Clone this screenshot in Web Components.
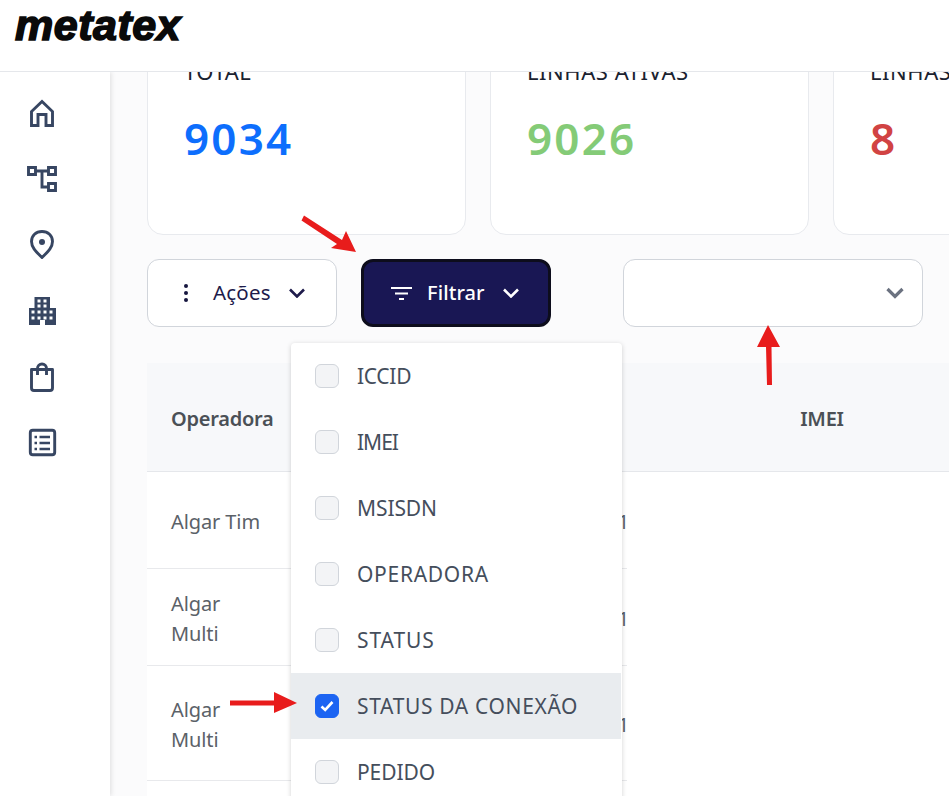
<!DOCTYPE html>
<html lang="pt-BR">
<head>
<meta charset="utf-8">
<title>metatex</title>
<style>
    html, body { margin: 0; height: 796px; overflow: hidden; background: #fff; }
    body { font-family: "Noto Sans", "Open Sans", sans-serif; color: #1f2937; position: relative; }
</style>
</head>
<body>

<mt-app>
    <mt-header slot="header">metatex</mt-header>
    <mt-sidebar slot="side"></mt-sidebar>

    <mt-stats>
        <mt-stat label="TOTAL" value="9034" color="#0d6efd"></mt-stat>
        <mt-stat label="LINHAS ATIVAS" value="9026" color="#84cb77"></mt-stat>
        <mt-stat label="LINHAS INATIVAS" value="8" color="#d14343"></mt-stat>
    </mt-stats>

    <mt-toolbar>
        <mt-button icon="dots">Ações</mt-button>
        <mt-button icon="filter" dark>
            Filtrar
            <mt-filter-menu slot="menu">
                <mt-check spacing="-0.3">ICCID</mt-check>
                <mt-check spacing="-1">IMEI</mt-check>
                <mt-check spacing="-0.1">MSISDN</mt-check>
                <mt-check spacing="0.7">OPERADORA</mt-check>
                <mt-check spacing="0.9">STATUS</mt-check>
                <mt-check spacing="0.65" checked>STATUS DA CONEXÃO</mt-check>
                <mt-check spacing="-0.1">PEDIDO</mt-check>
            </mt-filter-menu>
        </mt-button>
        <mt-select></mt-select>
    </mt-toolbar>

    <mt-table></mt-table>
</mt-app>

<mt-arrows></mt-arrows>

<script>
const appTemplate = document.createElement('template');
appTemplate.innerHTML = `
    <style>
        :host { display: grid; grid-template-columns: 110px 1fr; grid-template-rows: 72px 724px; height: 796px; overflow: hidden; }
        .top { grid-column: 1 / 3; position: relative; z-index: 3; }
        .side { position: relative; z-index: 2; }
        main { background: #fbfbfc; overflow: hidden; padding-left: 37px; min-width: 0; }
    </style>
    <div class="top"><slot name="header"></slot></div>
    <div class="side"><slot name="side"></slot></div>
    <main><slot></slot></main>
`;

class MtApp extends HTMLElement {
    constructor() {
        super();
        this.attachShadow({mode: 'open'});
        this.shadowRoot.appendChild(appTemplate.content.cloneNode(true));
    }
}

const headerTemplate = document.createElement('template');
headerTemplate.innerHTML = `
    <style>
        :host { display: block; box-sizing: border-box; height: 72px; background: #fff; border-bottom: 1px solid #e5e7eb; padding-left: 15px; }
        .logo {
            font: italic 700 43px/50px "Liberation Sans", Arial, sans-serif;
            color: #0a0a0a;
            -webkit-text-stroke: 1.6px #0a0a0a;
            letter-spacing: 0.5px;
        }
    </style>
    <div class="logo"><slot></slot></div>
`;

class MtHeader extends HTMLElement {
    constructor() {
        super();
        this.attachShadow({mode: 'open'});
        this.shadowRoot.appendChild(headerTemplate.content.cloneNode(true));
    }
}

const sidebarTemplate = document.createElement('template');
sidebarTemplate.innerHTML = `
    <style>
        :host { display: block; height: 724px; background: #fff; box-shadow: 1px 0 5px rgba(0, 0, 0, .12); }
        nav { display: flex; flex-direction: column; align-items: flex-start; gap: 36px; padding: 26px 0 0 27px; }
        svg { display: block; width: 30px; height: 30px; fill: none; stroke: #374662; stroke-width: 2.9; stroke-linejoin: round; }
    </style>
    <nav>
        <svg viewBox="27 98 30 30"><path stroke-linejoin="miter" d="M31.5 125.5V111.5L42 101.5L52.5 111.5V125.5H46V114.5H38V125.5Z"/></svg>
        <svg viewBox="27 164 30 30"><path stroke-linejoin="miter" d="M28.5 167.5H35.5V174.5H28.5ZM48.5 167.5H55.5V174.5H48.5ZM48.5 183.5H55.5V190.5H48.5ZM35.5 171H48.5M42 171V187H48.5"/></svg>
        <svg viewBox="27 230 30 30"><path d="M42 257.5C37 252.5 31.5 248 31.5 241.5C31.5 235.5 36 231.5 42 231.5C48 231.5 52.5 235.5 52.5 241.5C52.5 248 47 252.5 42 257.5Z"/><circle cx="42" cy="242" r="3" fill="#374662" stroke="none"/></svg>
        <svg viewBox="27 296 30 30"><path stroke="none" fill="#374662" fill-rule="evenodd" d="M34.500 297H50V308H56V325H45V320H40V325H29V308H34.500ZM37.500 299.500V302.500H40.500V299.500ZM43.500 299.500V302.500H46.500V299.500ZM37.500 304.500V307.500H40.500V304.500ZM43.500 304.500V307.500H46.500V304.500ZM31.500 310.500V313.500H34.500V310.500ZM37.500 310.500V313.500H40.500V310.500ZM43.500 310.500V313.500H46.500V310.500ZM49.500 310.500V313.500H52.500V310.500ZM31.500 316.500V319.500H34.500V316.500ZM37.500 316.500V319.500H40.500V316.500ZM43.500 316.500V319.500H46.500V316.500ZM49.500 316.500V319.500H52.500V316.500Z"/></svg>
        <svg viewBox="27 362 30 30"><path d="M31.500 369.500H52.500V388C52.500 389.500 51.500 390.500 50 390.500H34C32.500 390.500 31.500 389.500 31.500 388ZM37.500 375V368.500C37.500 365.800 39.500 364 42 364C44.500 364 46.500 365.800 46.500 368.500V375"/></svg>
        <svg viewBox="27 428 30 30"><rect x="30.300" y="430.300" width="24.400" height="24.400" rx="2.500"/><path d="M39.500 437H50M39.500 443H50M39.500 449H50" stroke-width="2.400"/><path d="M34.500 437H37M34.500 443H37M34.500 449H37" stroke-width="2.400"/></svg>
    </nav>
`;

class MtSidebar extends HTMLElement {
    constructor() {
        super();
        this.attachShadow({mode: 'open'});
        this.shadowRoot.appendChild(sidebarTemplate.content.cloneNode(true));
    }
}

const statsTemplate = document.createElement('template');
statsTemplate.innerHTML = `
    <style>
        :host { display: grid; grid-template-columns: repeat(3, 319px); column-gap: 24px; margin-top: -49px; }
    </style>
    <slot></slot>
`;

class MtStats extends HTMLElement {
    constructor() {
        super();
        this.attachShadow({mode: 'open'});
        this.shadowRoot.appendChild(statsTemplate.content.cloneNode(true));
    }
}

const statTemplate = document.createElement('template');
statTemplate.innerHTML = `
    <style>
        :host { display: block; box-sizing: border-box; height: 212px; padding: 33px 0 0 36px; background: #fff; border: 1px solid #e8eaee; border-radius: 16px; white-space: nowrap; }
        #label { font-size: 22px; line-height: 28px; letter-spacing: .55px; color: #1a2230; }
        #value { margin-top: 23px; font-size: 44px; line-height: 60px; font-weight: 600; letter-spacing: 2.2px; }
    </style>
    <div id="label"></div>
    <div id="value"></div>
`;

class MtStat extends HTMLElement {
    constructor() {
        super();
        this.attachShadow({mode: 'open'});
        this.shadowRoot.appendChild(statTemplate.content.cloneNode(true));
        this.shadowRoot.querySelector('#label').textContent = this.getAttribute('label');
        const value = this.shadowRoot.querySelector('#value');
        value.textContent = this.getAttribute('value');
        value.style.color = this.getAttribute('color');
    }
}

const toolbarTemplate = document.createElement('template');
toolbarTemplate.innerHTML = `
    <style>
        :host { display: flex; gap: 24px; margin-top: 24px; position: relative; z-index: 2; }
        ::slotted(mt-select) { margin-left: 48px; }
    </style>
    <slot></slot>
`;

class MtToolbar extends HTMLElement {
    constructor() {
        super();
        this.attachShadow({mode: 'open'});
        this.shadowRoot.appendChild(toolbarTemplate.content.cloneNode(true));
    }
}

const buttonIcons = {
    dots: `<svg width="6" height="20" viewBox="0 0 6 20" fill="#16163f"><circle cx="3" cy="3" r="2"/><circle cx="3" cy="10" r="2"/><circle cx="3" cy="17" r="2"/></svg>`,
    filter: `<svg width="22" height="14" viewBox="0 0 22 14" fill="none" stroke="#fff" stroke-width="2"><path d="M1 2H22M5 7.500H18M9 13H14"/></svg>`
};

const buttonTemplate = document.createElement('template');
buttonTemplate.innerHTML = `
    <style>
        :host { display: block; position: relative; box-sizing: border-box; width: 190px; height: 68px; background: #fff; border: 1px solid #d1d5db; border-radius: 12px; color: #1e1b4b; font-size: 20.5px; font-weight: 400; }
        :host([dark]) { background: #191754; border: 3px solid #0d0d1c; color: #fff; font-size: 20px; font-weight: 500; }
        .inner { height: 100%; display: flex; align-items: center; white-space: nowrap; padding-left: 35px; }
        :host([dark]) .inner { padding-left: 26px; }
        .icon { display: flex; margin-right: 24px; }
        :host([dark]) .icon { margin-right: 15px; }
        .label { padding-bottom: 2px; letter-spacing: .2px; }
        :host([dark]) .label { letter-spacing: .1px; }
        .chevron { margin-left: 18px; fill: none; stroke: currentColor; stroke-width: 2.6; }
    </style>
    <div class="inner">
        <span class="icon"></span>
        <span class="label"><slot></slot></span>
        <svg class="chevron" width="16" height="10" viewBox="0 0 16 10"><path d="M1 1.500L8 8.500L15 1.500"/></svg>
    </div>
    <slot name="menu"></slot>
`;

class MtButton extends HTMLElement {
    constructor() {
        super();
        this.attachShadow({mode: 'open'});
        this.shadowRoot.appendChild(buttonTemplate.content.cloneNode(true));
        this.shadowRoot.querySelector('.icon').innerHTML = buttonIcons[this.getAttribute('icon')];
    }
}

const selectTemplate = document.createElement('template');
selectTemplate.innerHTML = `
    <style>
        :host { display: flex; align-items: center; justify-content: flex-end; box-sizing: border-box; width: 300px; height: 68px; padding-right: 18px; background: #fff; border: 1px solid #d1d5db; border-radius: 12px; }
    </style>
    <svg width="18" height="12" viewBox="0 0 18 12" fill="none" stroke="#6b7280" stroke-width="3.2"><path d="M1.500 2L9 9.500L16.500 2"/></svg>
`;

class MtSelect extends HTMLElement {
    constructor() {
        super();
        this.attachShadow({mode: 'open'});
        this.shadowRoot.appendChild(selectTemplate.content.cloneNode(true));
    }
}

const menuTemplate = document.createElement('template');
menuTemplate.innerHTML = `
    <style>
        :host { display: block; position: absolute; left: -73px; top: 81px; box-sizing: border-box; width: 331px; background: #fff; border-radius: 4px; box-shadow: 0 1px 5px rgba(0, 0, 0, .18); padding-right: 1px; font-weight: 400; color: #4b5563; z-index: 5; }
    </style>
    <slot></slot>
`;

class MtFilterMenu extends HTMLElement {
    constructor() {
        super();
        this.attachShadow({mode: 'open'});
        this.shadowRoot.appendChild(menuTemplate.content.cloneNode(true));
    }
}

const checkTemplate = document.createElement('template');
checkTemplate.innerHTML = `
    <style>
        :host { display: flex; align-items: center; gap: 18px; height: 66px; padding-left: 24px; font-size: 21px; color: #454e5c; white-space: nowrap; }
        :host([checked]) { background: #e9ecef; }
        .box { box-sizing: border-box; width: 24px; height: 24px; background: #f3f4f6; border: 1px solid #d1d5db; border-radius: 6px; display: flex; align-items: center; justify-content: center; }
        :host([checked]) .box { background: #1c64f2; border-color: #1c64f2; }
        svg { display: none; }
        :host([checked]) svg { display: block; }
    </style>
    <span class="box"><svg width="14" height="12" viewBox="0 0 14 12" fill="none" stroke="#fff" stroke-width="2.600"><path d="M1.500 6.500L5.200 10L12.500 2"/></svg></span>
    <span class="text"><slot></slot></span>
`;

class MtCheck extends HTMLElement {
    constructor() {
        super();
        this.attachShadow({mode: 'open'});
        this.shadowRoot.appendChild(checkTemplate.content.cloneNode(true));
        this.shadowRoot.querySelector('.text').style.letterSpacing = (this.getAttribute('spacing') || 0) + 'px';
    }
}

const tableTemplate = document.createElement('template');
tableTemplate.innerHTML = `
    <style>
        :host { display: grid; grid-template-columns: 150px 330px 390px; grid-template-rows: 109px 97px 97px 115px 97px; width: 870px; margin-top: 36px; background: #fff; color: #5b6168; font-size: 20px; letter-spacing: -.1px; }
        div { box-sizing: border-box; display: flex; align-items: center; padding: 4px 0 0 24px; line-height: 30px; }
        .head { background: #f7f8fa; border-bottom: 1px solid #e5e7eb; font-weight: 600; color: #4b5056; letter-spacing: -.25px; }
        .center { justify-content: center; padding-left: 0; }
        .cell { border-bottom: 1px solid #e8e9ec; }
        .num { justify-content: flex-end; padding-left: 0; }
        .num span { margin-right: -2px; }
    </style>
    <div class="head">Operadora</div><div class="head"></div><div class="head center">IMEI</div>
    <div class="cell">Algar Tim</div><div class="cell num"><span>1</span></div><div></div>
    <div class="cell">Algar<br>Multi</div><div class="cell num"><span>1</span></div><div></div>
    <div class="cell">Algar<br>Multi</div><div class="cell num"><span>1</span></div><div></div>
    <div class="cell"></div><div class="cell"></div><div></div>
`;

class MtTable extends HTMLElement {
    constructor() {
        super();
        this.attachShadow({mode: 'open'});
        this.shadowRoot.appendChild(tableTemplate.content.cloneNode(true));
    }
}

// the red marks drawn over the screenshot
const arrowsTemplate = document.createElement('template');
arrowsTemplate.innerHTML = `
    <style>
        :host { display: block; position: absolute; left: 0; top: 0; width: 949px; height: 796px; pointer-events: none; z-index: 10; }
        svg { display: block; }
    </style>
    <svg width="949" height="796" viewBox="0 0 949 796" fill="#e81c1c">
        <path d="M304 215.500L342 240L346 231L356 252L331 248L337 244L301.500 220.500Z"/>
        <path d="M768 325L780 347H771.500L772 385H767L766 347H757Z"/>
        <path d="M230 700.500H274V692L297 703L274 713V705.500H230Z"/>
    </svg>
`;

class MtArrows extends HTMLElement {
    constructor() {
        super();
        this.attachShadow({mode: 'open'});
        this.shadowRoot.appendChild(arrowsTemplate.content.cloneNode(true));
    }
}

window.customElements.define('mt-app', MtApp);
window.customElements.define('mt-header', MtHeader);
window.customElements.define('mt-sidebar', MtSidebar);
window.customElements.define('mt-stats', MtStats);
window.customElements.define('mt-stat', MtStat);
window.customElements.define('mt-toolbar', MtToolbar);
window.customElements.define('mt-button', MtButton);
window.customElements.define('mt-select', MtSelect);
window.customElements.define('mt-filter-menu', MtFilterMenu);
window.customElements.define('mt-check', MtCheck);
window.customElements.define('mt-table', MtTable);
window.customElements.define('mt-arrows', MtArrows);
</script>
</body>
</html>
